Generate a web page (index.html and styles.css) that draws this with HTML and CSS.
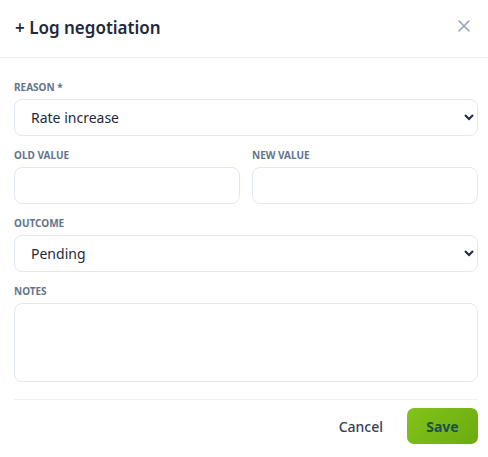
FILE: index.html
```html
<!DOCTYPE html>
<html lang="en">
<head>
    <meta charset="UTF-8">
    <meta name="viewport" content="width=device-width, initial-scale=1.0">
    <title>Log negotiation</title>
    <link rel="stylesheet" href="styles.css">
</head>
<body>
    <div class="modal">
        <div class="modal-header">
            <h2>+ Log negotiation</h2>
            <button class="close-btn" aria-label="Close">
                <svg width="12" height="12" viewBox="0 0 12 12">
                    <path d="M1 1L11 11M11 1L1 11" stroke="#94a3b8" stroke-width="1.6" stroke-linecap="round"/>
                </svg>
            </button>
        </div>
        <form class="modal-body">
            <div class="form-group">
                <label for="reason">Reason *</label>
                <select id="reason" name="reason">
                    <option>Rate increase</option>
                    <option>Rate decrease</option>
                    <option>Scope change</option>
                </select>
            </div>
            <div class="form-row">
                <div class="form-group">
                    <label for="oldValue">Old value</label>
                    <input type="text" id="oldValue" name="oldValue">
                </div>
                <div class="form-group">
                    <label for="newValue">New value</label>
                    <input type="text" id="newValue" name="newValue">
                </div>
            </div>
            <div class="form-group">
                <label for="outcome">Outcome</label>
                <select id="outcome" name="outcome">
                    <option>Pending</option>
                    <option>Accepted</option>
                    <option>Rejected</option>
                </select>
            </div>
            <div class="form-group">
                <label for="notes">Notes</label>
                <textarea id="notes" name="notes"></textarea>
            </div>
        </form>
        <div class="modal-footer">
            <button type="button" class="btn-cancel">Cancel</button>
            <button type="submit" class="btn-save">Save</button>
        </div>
    </div>
</body>
</html>
```

FILE: styles.css
```css
body {
    font-family: "Noto Sans", "Open Sans", Arial, sans-serif;
    background-color: #fff;
    color: #1e293b;
    margin: 0;
    padding: 0;
}

.modal {
    width: 488px;
    background: #fff;
}

.modal-header {
    display: flex;
    align-items: center;
    justify-content: space-between;
    height: 58px;
    padding: 0 14px 0 15px;
    border-bottom: 1px solid #eef1f5;
    box-sizing: border-box;
}

.modal-header h2 {
    margin: -3px 0 0 0;
    font-size: 17px;
    font-weight: 600;
    color: #1e293b;
}

.close-btn {
    background: none;
    border: none;
    padding: 0;
    width: 20px;
    height: 20px;
    display: flex;
    align-items: center;
    justify-content: center;
    margin-top: -6px;
    cursor: pointer;
}

.modal-body {
    padding: 22px 10px 17px 14px;
    display: flex;
    flex-direction: column;
    gap: 12px;
}

.form-row {
    display: grid;
    grid-template-columns: 1fr 1fr;
    gap: 12px;
}

.form-group label {
    display: block;
    font-size: 10px;
    line-height: 14px;
    font-weight: 700;
    text-transform: uppercase;
    color: #64748b;
    margin-bottom: 5px;
}

.form-group input,
.form-group select,
.form-group textarea {
    display: block;
    width: 100%;
    box-sizing: border-box;
    border: 1px solid #e2e8f0;
    border-radius: 8px;
    background: #fff;
    font-family: inherit;
    font-size: 14px;
    color: #1e293b;
}

.form-group input,
.form-group select {
    height: 37px;
    padding: 0 10px 0 12px;
}

.form-group textarea {
    height: 79px;
    padding: 8px 12px;
    resize: none;
}

.modal-footer {
    margin: 0 10px 0 14px;
    border-top: 1px solid #eef1f5;
    padding-top: 8px;
    display: flex;
    justify-content: flex-end;
    align-items: center;
    gap: 16px;
}

.btn-cancel {
    background: none;
    border: none;
    font-family: inherit;
    font-size: 14px;
    font-weight: 500;
    color: #334155;
    padding: 0 8px;
    height: 36px;
    cursor: pointer;
}

.btn-save {
    background: linear-gradient(135deg, #84c31a, #6aab12);
    border: none;
    border-radius: 7px;
    font-family: inherit;
    font-size: 14px;
    font-weight: 700;
    color: #1d4f4f;
    width: 71px;
    height: 36px;
    cursor: pointer;
}
```
